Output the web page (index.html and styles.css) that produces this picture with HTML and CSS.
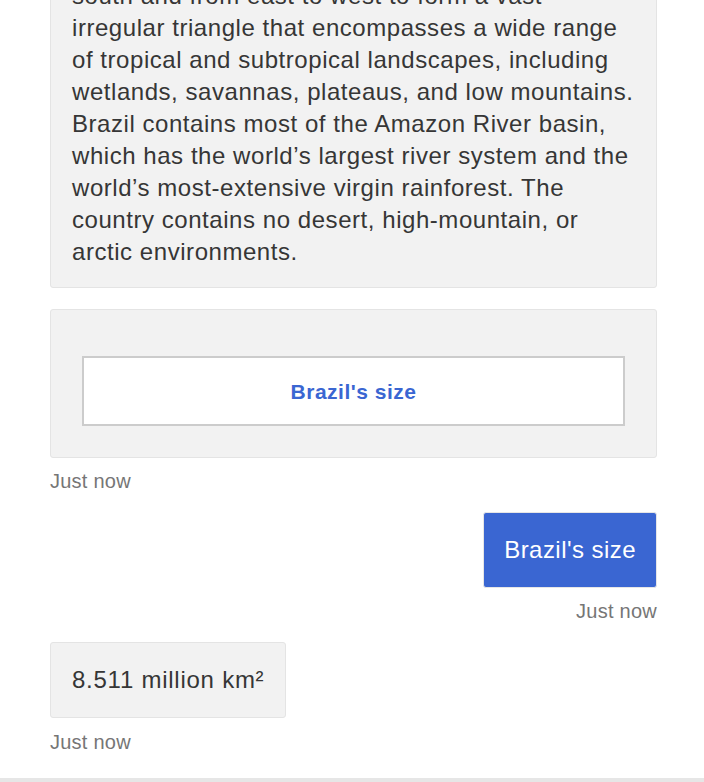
FILE: index.html
```html
<!DOCTYPE html>
<html lang="en">
<head>
<meta charset="utf-8">
<title>Chat</title>
<link rel="stylesheet" href="styles.css">
</head>
<body>
<div class="chat">
  <div class="messages">
    <div class="msg bot first">
      <div class="bubble text-bubble">
        Brazil occupies roughly half of South America and is<br>
        the continent’s largest country. Its territory extends<br>
        some 2,700 miles (4,350 km) from north to<br>
        south and from east to west to form a vast<br>
        irregular triangle that encompasses a wide range<br>
        of tropical and subtropical landscapes, including<br>
        wetlands, savannas, plateaus, and low mountains.<br>
        Brazil contains most of the Amazon River basin,<br>
        which has the world’s largest river system and the<br>
        world’s most-extensive virgin rainforest. The<br>
        country contains no desert, high-mountain, or<br>
        arctic environments.
      </div>
    </div>
    <div class="msg bot card-msg">
      <div class="bubble card">
        <button class="card-btn" type="button">Brazil's size</button>
      </div>
      <div class="time">Just now</div>
    </div>
    <div class="msg user">
      <div class="bubble user-bubble">Brazil's size</div>
      <div class="time">Just now</div>
    </div>
    <div class="msg bot last">
      <div class="bubble short-bubble">8.511 million km²</div>
      <div class="time">Just now</div>
    </div>
  </div>
  <div class="input-edge"></div>
</div>
</body>
</html>
```

FILE: styles.css
```css
html, body {
  margin: 0;
  padding: 0;
  background: #ffffff;
}

body {
  font-family: "Liberation Sans", Arial, sans-serif;
  color: #363636;
}

.chat {
  height: 782px;
  display: flex;
  flex-direction: column;
  overflow: hidden;
}

.messages {
  flex: 1;
  min-height: 0;
  overflow: hidden;
  display: flex;
  flex-direction: column;
  justify-content: flex-end;
  padding: 0 47px 24px 50px;
}

.msg {
  display: flex;
  flex-direction: column;
  align-items: flex-start;
}

.card-msg {
  margin-top: 21px;
}

.msg.user {
  margin-top: 19px;
}

.msg.last {
  margin-top: 19px;
}

.msg.user {
  align-items: flex-end;
}

.bubble {
  box-sizing: border-box;
  background: #f2f2f2;
  border: 1px solid #e4e4e4;
  border-radius: 3px;
  font-size: 24px;
  line-height: 32px;
  letter-spacing: 0.55px;
}

.text-bubble {
  width: 100%;
  padding: 0 8px 19px 21px;
}

.card {
  width: 100%;
  padding: 46px 31px 31px 31px;
}

.card-btn {
  display: block;
  width: 100%;
  height: 70px;
  background: #ffffff;
  border: 2px solid #cccccc;
  border-radius: 0;
  color: #3a66d2;
  font-family: "Liberation Sans", Arial, sans-serif;
  font-weight: bold;
  font-size: 21px;
  letter-spacing: 0.5px;
  padding: 2px 0 0 0;
}

.user-bubble {
  background: #3a66d2;
  border-color: #e6e6e6;
  color: #ffffff;
  padding: 21px 20px;
  letter-spacing: 0.45px;
}

.short-bubble {
  padding: 21px 21px;
  letter-spacing: 0.75px;
}

.time {
  margin-top: 12px;
  font-size: 20px;
  line-height: 24px;
  letter-spacing: 0.25px;
  color: #767676;
}

.card-msg .time {
  margin-top: 11px;
}

.msg.user .time {
  margin-top: 11px;
}

.input-edge {
  height: 4px;
  background: #e6e6e6;
}
```
